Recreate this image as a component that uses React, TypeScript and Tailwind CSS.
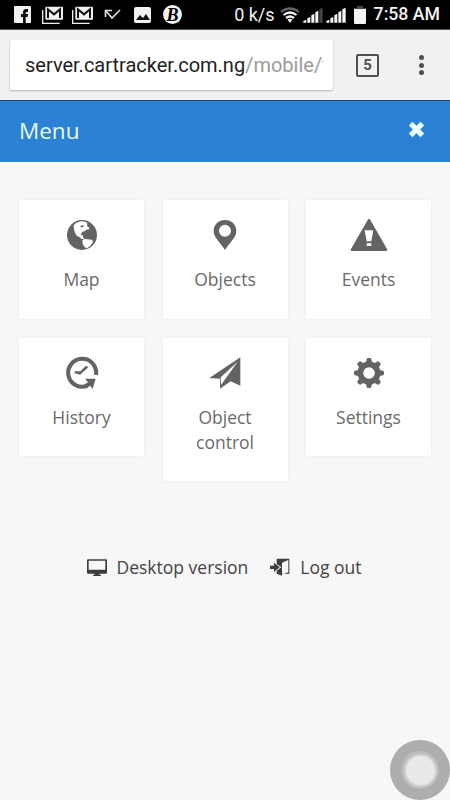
import type { ReactNode } from "react";

function GlobeIcon() {
  return (
    <svg viewBox="0 0 96 96" className="size-8">
      <circle cx="48" cy="48" r="45" fill="#636363" />
      <path
        fill="#fff"
        d="M23 19l8-8 12-4 15 1 6 4-1 9 7 5-1 5-8 1-4 4-8 3-5 7 2 3 4-1 2 3-3 3 5 3 1 4-8-1-7-6-8-4-6-11-3-15z"
      />
      <path fill="#fff" d="M49 64l7-4 22 2 3 4-2 6-6 8-10 8-7-3-6-11z" />
      <path fill="#636363" d="M43 20l8-1 3 3-3 3-7-1z" />
    </svg>
  );
}

function PinIcon() {
  return (
    <svg viewBox="0 0 96 96" className="size-8">
      <path
        fill="#636363"
        fillRule="evenodd"
        d="M48 3C29 3 14 17 14 36c0 20 20 34 34 57 14-23 34-37 34-57C82 17 67 3 48 3zm0 14a18 18 0 1 1 0 36 18 18 0 0 1 0-36z"
      />
    </svg>
  );
}

function WarningIcon() {
  return (
    <svg viewBox="0 0 114 102" className="h-[34px] w-[38px]">
      <path
        fill="#636363"
        fillRule="evenodd"
        d="M57 3c2 0 3 1 4 3l50 87c2 4 1 6-3 6H6c-4 0-5-2-3-6L53 6c1-2 2-3 4-3zM44 37l6 33h14l6-33zm6 39v8h14v-8z"
      />
    </svg>
  );
}

function HistoryIcon() {
  return (
    <svg viewBox="0 0 102 99" className="h-[33px] w-[34px]">
      <path d="M93 57A42 42 0 1 0 68 89" fill="none" stroke="#636363" strokeWidth="12" />
      <path fill="#636363" d="M60 68h32l-9 30-8-9-12 8-7-10 13-8z" />
      <path fill="#636363" d="M29 46h17l17-17 7 5-20 18-4 4-17-4z" />
    </svg>
  );
}

function PlaneIcon() {
  return (
    <svg viewBox="0 0 96 96" className="size-8">
      <path
        fill="#636363"
        fillRule="evenodd"
        d="M94 1v85L65 73 33 95V65L1 63zM86 14L35 61l1 23z"
      />
    </svg>
  );
}

const teeth = [0, 45, 90, 135, 180, 225, 270, 315];

function GearIcon() {
  return (
    <svg viewBox="0 0 96 96" className="size-8">
      <circle cx="48" cy="48" r="26" fill="none" stroke="#636363" strokeWidth="17" />
      {teeth.map((angle) => (
        <path
          key={angle}
          transform={`rotate(${angle} 48 48)`}
          fill="#636363"
          d="M38 20l3-14q1-3 4-3h6q3 0 4 3l3 14z"
        />
      ))}
    </svg>
  );
}

function Tile({ label, icon, tall }: { label: ReactNode; icon: ReactNode; tall?: boolean }) {
  return (
    <button
      className={`flex w-[125px] flex-col items-center bg-white shadow-[0_0_4px_rgba(0,0,0,0.05)] ${
        tall ? "h-[143px]" : "h-[118.6px]"
      }`}
    >
      <span className="mt-[16.4px] flex h-[38px] items-center justify-center">{icon}</span>
      <span className="mt-[12.6px] text-[17.500px] leading-[25px] text-[#6a6a6a]">{label}</span>
    </button>
  );
}

function MailIcon() {
  return (
    <svg viewBox="0 0 66 54" className="h-[18px] w-[22px]">
      <path d="M2 12v40h51" fill="none" stroke="#eee" strokeWidth="4" />
      <rect x="10" y="2" width="53" height="39" rx="3" fill="#f2f2f2" />
      <path d="M18 36V10l18 15 18-15v26" fill="none" stroke="#111" strokeWidth="6" />
    </svg>
  );
}

function SignalIcon({ weak }: { weak?: boolean }) {
  return (
    <svg viewBox="0 0 60 48" className="h-4 w-5">
      <path d="M1 47v-5l9-4v9zM13 47V34l9-4v17zM25 47V25l9-5v27zM37 47V16l9-5v36z" fill="#f4f4f4" />
      <path d="M49 47V7l10-5v45z" fill={weak ? "#444" : "#f4f4f4"} />
    </svg>
  );
}

function StatusBar() {
  return (
    <div className="flex h-[30px] items-center border-b border-[#555] bg-black pl-[14px] pr-[10px] font-['Roboto',sans-serif] text-[#f2f2f2]">
      <svg viewBox="0 0 17 17" className="size-[17px]">
        <rect width="17" height="17" rx="1" fill="#f2f2f2" />
        <path d="M9 17v-6H7V8h2V6.500Q9 3 12 3h2v3h-1.300q-1 0-1 1v1H14l-.400 3h-1.900v6z" fill="#111" />
      </svg>
      <span className="ml-[11px] flex"><MailIcon /></span>
      <span className="ml-[8px] flex"><MailIcon /></span>
      <svg viewBox="0 0 17 12" className="ml-[10px] h-3 w-[17px]">
        <path d="M1.500 8V1.500H8M2 2l6 7 8-8" fill="none" stroke="#ddd" strokeWidth="1.700" />
      </svg>
      <svg viewBox="0 0 17 16" className="ml-[13px] h-4 w-[17px]">
        <rect width="17" height="16" rx="2" fill="#f2f2f2" />
        <path d="M2 13l4-5 3 3 3-4 4 6z" fill="#111" />
      </svg>
      <span className="ml-[12px] flex size-[19px] items-center justify-center rounded-full bg-[#f2f2f2] font-['Liberation_Serif',serif] text-[18px] font-bold italic leading-none text-black">
        B
      </span>
      <span className="ml-auto whitespace-nowrap text-[18px] leading-none">0 k/s</span>
      <svg viewBox="0 0 20 16" className="ml-[5px] h-4 w-5">
        <path d="M1 5Q10-2 19 5" fill="none" stroke="#666" strokeWidth="2.200" />
        <path d="M3.500 8Q10 3 16.500 8M6 11q4-3 8 0" fill="none" stroke="#f2f2f2" strokeWidth="2.200" />
        <path d="M7.500 12.500Q10 11 12.500 12.500L10 16z" fill="#f2f2f2" />
      </svg>
      <span className="ml-[3px] flex"><SignalIcon weak /></span>
      <span className="ml-[3px] flex"><SignalIcon /></span>
      <svg viewBox="0 0 12 18" className="ml-[8px] h-[18px] w-3">
        <path d="M3 0h6v2h3v3H0V2h3z" fill="#444" />
        <path d="M0 3h12v14q0 1-1 1H1q-1 0-1-1z" fill="#f4f4f4" />
      </svg>
      <span className="ml-[8px] whitespace-nowrap text-[17.700px] font-medium leading-none">7:58 AM</span>
    </div>
  );
}

function AddressBar() {
  return (
    <div className="flex h-[70px] items-center bg-[#f1f1f1] pl-[10px]">
      <div className="flex h-[50px] w-[323px] items-center overflow-hidden rounded-[2px] bg-white pl-[15px] font-['Roboto',sans-serif] text-[20px] shadow-[0_1px_2px_rgba(0,0,0,0.25)]">
        <div className="w-[298px] overflow-hidden whitespace-nowrap text-[#9b9b9b]">
          <span className="text-[#222]">server.cartracker.com.ng</span>/mobile/t
        </div>
      </div>
      <div className="ml-[23px] flex size-[23px] items-center justify-center rounded-[2px] border-[2.500px] border-[#505050] font-['Roboto',sans-serif] text-[15px] font-bold leading-none text-[#505050]">
        5
      </div>
      <div className="ml-[39.500px] flex flex-col gap-[2.500px]">
        <i className="size-[5px] rounded-full bg-[#505050]" />
        <i className="size-[5px] rounded-full bg-[#505050]" />
        <i className="size-[5px] rounded-full bg-[#505050]" />
      </div>
    </div>
  );
}

export default function App() {
  return (
    <div className="relative h-[800px] w-[450px] overflow-hidden bg-[#f7f7f7] font-['Open_Sans',sans-serif]">
      <StatusBar />
      <AddressBar />
      <header className="flex h-[62px] items-center justify-between border-t border-[#174a78] bg-[#2b81d3] pl-[19px] pr-[25px]">
        <h1 className="text-[22.500px] leading-none text-[#e8fbff]">Menu</h1>
        <svg viewBox="0 0 16 16" className="-mt-1 size-[17px]">
          <path d="M2.500 2.500l11 11M13.500 2.500l-11 11" stroke="#efffff" strokeWidth="4.800" />
        </svg>
      </header>
      <main className="grid grid-cols-[125px_125px_125px] items-start gap-x-[18.500px] gap-y-[19px] pl-[19px] pt-[38px]">
        <Tile label="Map" icon={<GlobeIcon />} />
        <Tile label="Objects" icon={<PinIcon />} />
        <Tile label="Events" icon={<WarningIcon />} />
        <Tile label="History" icon={<HistoryIcon />} />
        <Tile label={<>Object<br />control</>} icon={<PlaneIcon />} tall />
        <Tile label="Settings" icon={<GearIcon />} />
      </main>
      <nav className="mt-[74px] flex h-[25px] items-center pl-[87px] text-[17.500px] text-[#444]">
        <svg viewBox="0 0 60 51" className="h-[17px] w-5">
          <path
            fill="#3d3d3d"
            fillRule="evenodd"
            d="M3 1h54q3 0 3 3v37q0 3-3 3H38v4h4v3H18v-3h4v-4H3q-3 0-3-3V4q0-3 3-3zm2 4v27h50V5z"
          />
        </svg>
        <span className="ml-[9.500px] whitespace-nowrap">Desktop version</span>
        <svg viewBox="0 0 60 54" className="ml-[22px] h-[18px] w-5">
          <path
            fill="#3d3d3d"
            fillRule="evenodd"
            d="M20 2h38v45H36v6L20 47V38l14-10-14-10zM39 13l16-7v37l-19 6V15z"
          />
          <path fill="#3d3d3d" d="M0 23h12v-9l17 14-17 14v-9H0z" />
        </svg>
        <span className="ml-[10px] whitespace-nowrap">Log out</span>
      </nav>
      <div className="absolute left-[390px] top-[740px] flex size-[60px] items-center justify-center rounded-full bg-[#adadad]">
        <div className="flex size-[38px] items-center justify-center rounded-full bg-[#bdbdbd]">
          <div className="size-[33px] rounded-full border-2 border-[#d2d2d2] bg-[#e9e9e9]" />
        </div>
      </div>
    </div>
  );
}
